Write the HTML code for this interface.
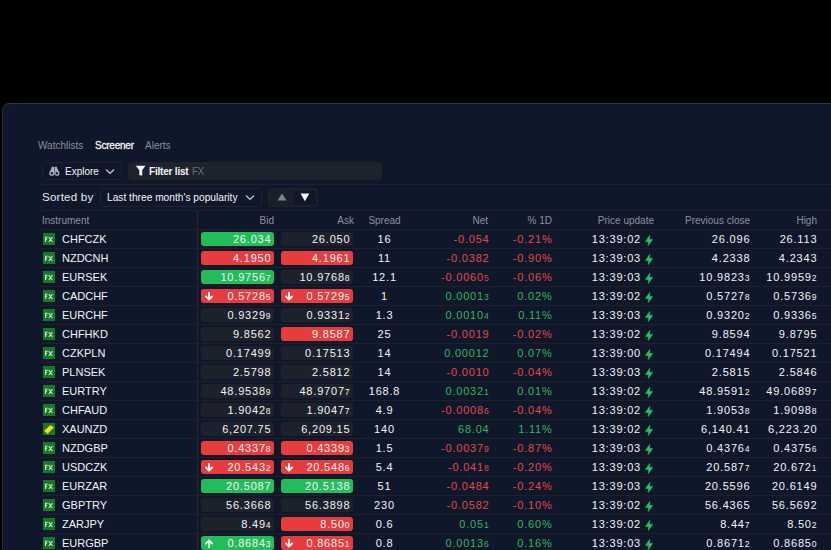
<!DOCTYPE html>
<html><head><meta charset="utf-8">
<style>
*{margin:0;padding:0;box-sizing:border-box}
html,body{width:831px;height:550px;overflow:hidden;background:#000}
body{font-family:"Liberation Sans",sans-serif;position:relative;color:#e8eaee}
.panel{position:absolute;left:2px;top:103px;width:900px;height:500px;background:#0f172a;border:1px solid #283346;border-left-color:#202a3a;border-radius:7px}
.abs{position:absolute;white-space:nowrap}
.tab{position:absolute;top:140px;font-size:10px;line-height:12px;color:#8b8f98}
.tab.on{color:#f3f4f6;letter-spacing:-0.22px;-webkit-text-stroke:0.3px #f3f4f6}
.btn{position:absolute;left:42px;top:162px;width:80px;height:18px;border:1px solid #1d2230;border-radius:4px;background:#10172a}
.filter{position:absolute;left:128px;top:162px;width:254px;height:18px;border-radius:4px;background:#1d222c}
.hline{position:absolute;left:41px;width:840px;height:1px;background:#221f2a}
.sortlbl{position:absolute;left:42px;top:190px;font-size:11.6px;letter-spacing:0.2px;line-height:14px;color:#e8eaee}
.dd{position:absolute;left:100px;top:188px;width:162px;height:19px;border:1px solid #1f2431;border-radius:4px}
.tog{position:absolute;left:268px;top:188px;width:50px;height:19px;border-radius:4px;background:#1b1f2a;box-shadow:inset 0 0 0 1px #1f232c}
.tog .sel{position:absolute;left:25px;top:2.5px;width:23px;height:14px;border-radius:3px;background:#0f172a}
.hdr{position:absolute;top:215px;font-size:10px;line-height:12px;color:#8e929b;white-space:nowrap}
.vline{position:absolute;left:197px;top:211px;width:1px;height:340px;background:#29282f}
.line{position:absolute;left:41px;width:800px;height:1px;background:#221f29}
.icw{position:absolute;left:43px}
.ic{width:12px;height:12px;background:#17782c;position:relative}
.ic svg{position:absolute;left:0;top:0}
.fx span{position:absolute;left:0;top:0;width:12px;text-align:center;font-size:6px;line-height:12px;font-weight:bold;color:#d9f5d9}
.name{position:absolute;left:62px;margin-top:1px;font-size:11px;line-height:19px;color:#f3f4f6;white-space:nowrap}
.box{position:absolute;height:14px;border-radius:3px;font-size:11px;line-height:14px;color:#f3f4f6;text-align:right;padding-right:2.6px;white-space:nowrap;letter-spacing:0.8px}
.box.g{background:#22bd5a}
.box.r{background:#e63c3e}
.box.n{background:#1c212b}
.box .ar{position:absolute;left:4px;top:3px}
.c{position:absolute;font-size:11px;line-height:19px;color:#f3f4f6;white-space:nowrap;letter-spacing:0.8px;margin-top:1px}
.ctr{text-align:center}
.rt{text-align:right}
.tg{color:#34b55b}
.tr{color:#e5484d}
small{font-size:8.6px;letter-spacing:0;margin-right:0.8px}
.bw{position:absolute;left:645px}
.bw svg{display:block}
</style></head><body>
<div class="panel"></div>
<div class="tab" style="left:38px">Watchlists</div>
<div class="tab on" style="left:95px">Screener</div>
<div class="tab" style="left:145px">Alerts</div>

<div class="btn"></div>
<svg class="abs" style="left:48px;top:166px" width="12" height="10" viewBox="0 0 12 10"><g fill="#a9aeb8"><path d="M3.9 0.8H6.1V5.5L1.6 6.6Z"/><path d="M6.5 0.8H8.7L11 6.6L6.5 5.5Z"/></g><g fill="none" stroke="#a9aeb8" stroke-width="1.4"><circle cx="3.8" cy="7.2" r="1.9"/><circle cx="8.8" cy="7.2" r="1.9"/></g></svg>
<div class="abs" style="left:65px;top:165px;font-size:10px;line-height:14px;color:#f3f4f6">Explore</div>
<svg class="abs" style="left:105px;top:168px" width="10" height="7" viewBox="0 0 10 7"><path d="M1 1.5L5 5.5L9 1.5" stroke="#c9ccd2" stroke-width="1.2" fill="none"/></svg>

<div class="filter"></div>
<svg class="abs" style="left:135px;top:165px" width="11" height="11" viewBox="0 0 11 11"><path d="M0.8 0.8H10.4L7.2 5.3V10.6L4.3 10.2V5.3Z" fill="#f3f4f6"/></svg>
<div class="abs" style="left:149px;top:165px;font-size:10px;letter-spacing:-0.2px;line-height:14px;color:#f3f4f6;font-weight:bold">Filter list</div>
<div class="abs" style="left:192px;top:165px;font-size:10px;letter-spacing:-0.6px;line-height:14px;color:#6b707a">FX</div>

<div class="hline" style="top:184px"></div>

<div class="sortlbl">Sorted by</div>
<div class="dd"></div>
<div class="abs" style="left:107px;top:191px;font-size:10.2px;line-height:14px;color:#f3f4f6">Last three month's popularity</div>
<svg class="abs" style="left:245px;top:194px" width="10" height="7" viewBox="0 0 10 7"><path d="M1 1.5L5 5.5L9 1.5" stroke="#c9ccd2" stroke-width="1.2" fill="none"/></svg>
<div class="tog"><div class="sel"></div></div>
<svg class="abs" style="left:277px;top:193px" width="10" height="8" viewBox="0 0 10 8"><path d="M5 0.5L9.5 7.5H0.5Z" fill="#80858f"/></svg>
<svg class="abs" style="left:299.5px;top:193px" width="10" height="9" viewBox="0 0 10 9"><path d="M0.5 0.6H9.3L4.9 8.2Z" fill="#f3f4f6"/></svg>

<div class="line" style="top:210px"></div>
<div class="hdr" style="left:42px">Instrument</div>
<div class="hdr" style="right:557px">Bid</div>
<div class="hdr" style="right:477px">Ask</div>
<div class="hdr" style="left:354px;width:61px;text-align:center">Spread</div>
<div class="hdr" style="right:343px">Net</div>
<div class="hdr" style="right:279px">% 1D</div>
<div class="hdr" style="right:177px">Price update</div>
<div class="hdr" style="right:81px">Previous close</div>
<div class="hdr" style="right:14px">High</div>
<div class="vline"></div>
<div class="line" style="top:229px"></div>
<div class="icw" style="top:233px"><div class="ic"><svg width="12" height="12" viewBox="0 0 12 12"><path d="M2.6 9V4.2H4.6M2.6 6.4H4.1M5.8 4.2L9.4 9M9.4 4.2L5.8 9" stroke="#cfe9cf" stroke-width="1.1" fill="none"/></svg></div></div>
<div class="name" style="top:229px">CHFCZK</div>
<div class="box g" style="top:232px;left:201px;width:73px"><span>26.034</span></div>
<div class="box n" style="top:232px;left:281px;width:72px"><span>26.050</span></div>
<div class="c ctr" style="top:229px;left:354px;width:61px">16</div>
<div class="c rt tr" style="top:229px;right:341.5px">-0.054</div>
<div class="c rt tr" style="top:229px;right:278.5px">-0.21%</div>
<div class="c rt" style="top:229px;right:190px">13:39:02</div>
<div class="bw" style="top:235px"><svg class="bolt" width="9" height="11" viewBox="0 0 9 11"><path d="M4.8 0.4L0.5 6.4H3.8L3.2 10.6L7.6 4.4H4.4Z" fill="#27c85f" stroke="#27c85f" stroke-width="0.6" stroke-linejoin="round"/></svg></div>
<div class="c rt" style="top:229px;right:80.70000000000005px">26.096</div>
<div class="c rt" style="top:229px;right:13.700000000000045px">26.113</div>
<div class="line" style="top:248px"></div>
<div class="icw" style="top:252px"><div class="ic"><svg width="12" height="12" viewBox="0 0 12 12"><path d="M2.6 9V4.2H4.6M2.6 6.4H4.1M5.8 4.2L9.4 9M9.4 4.2L5.8 9" stroke="#cfe9cf" stroke-width="1.1" fill="none"/></svg></div></div>
<div class="name" style="top:248px">NZDCNH</div>
<div class="box r" style="top:251px;left:201px;width:73px"><span>4.1950</span></div>
<div class="box r" style="top:251px;left:281px;width:72px"><span>4.1961</span></div>
<div class="c ctr" style="top:248px;left:354px;width:61px">11</div>
<div class="c rt tr" style="top:248px;right:341.5px">-0.0382</div>
<div class="c rt tr" style="top:248px;right:278.5px">-0.90%</div>
<div class="c rt" style="top:248px;right:190px">13:39:03</div>
<div class="bw" style="top:254px"><svg class="bolt" width="9" height="11" viewBox="0 0 9 11"><path d="M4.8 0.4L0.5 6.4H3.8L3.2 10.6L7.6 4.4H4.4Z" fill="#27c85f" stroke="#27c85f" stroke-width="0.6" stroke-linejoin="round"/></svg></div>
<div class="c rt" style="top:248px;right:80.70000000000005px">4.2338</div>
<div class="c rt" style="top:248px;right:13.700000000000045px">4.2343</div>
<div class="line" style="top:267px"></div>
<div class="icw" style="top:271px"><div class="ic"><svg width="12" height="12" viewBox="0 0 12 12"><path d="M2.6 9V4.2H4.6M2.6 6.4H4.1M5.8 4.2L9.4 9M9.4 4.2L5.8 9" stroke="#cfe9cf" stroke-width="1.1" fill="none"/></svg></div></div>
<div class="name" style="top:267px">EURSEK</div>
<div class="box g" style="top:270px;left:201px;width:73px"><span>10.9756<small>7</small></span></div>
<div class="box n" style="top:270px;left:281px;width:72px"><span>10.9768<small>8</small></span></div>
<div class="c ctr" style="top:267px;left:354px;width:61px">12.1</div>
<div class="c rt tr" style="top:267px;right:341.5px">-0.0060<small>5</small></div>
<div class="c rt tr" style="top:267px;right:278.5px">-0.06%</div>
<div class="c rt" style="top:267px;right:190px">13:39:03</div>
<div class="bw" style="top:273px"><svg class="bolt" width="9" height="11" viewBox="0 0 9 11"><path d="M4.8 0.4L0.5 6.4H3.8L3.2 10.6L7.6 4.4H4.4Z" fill="#27c85f" stroke="#27c85f" stroke-width="0.6" stroke-linejoin="round"/></svg></div>
<div class="c rt" style="top:267px;right:80.70000000000005px">10.9823<small>3</small></div>
<div class="c rt" style="top:267px;right:13.700000000000045px">10.9959<small>2</small></div>
<div class="line" style="top:286px"></div>
<div class="icw" style="top:290px"><div class="ic"><svg width="12" height="12" viewBox="0 0 12 12"><path d="M2.6 9V4.2H4.6M2.6 6.4H4.1M5.8 4.2L9.4 9M9.4 4.2L5.8 9" stroke="#cfe9cf" stroke-width="1.1" fill="none"/></svg></div></div>
<div class="name" style="top:286px">CADCHF</div>
<div class="box r" style="top:289px;left:201px;width:73px"><svg class="ar" width="8" height="9" viewBox="0 0 8 9"><path d="M4 0.5V7.5M1 4.5L4 7.5L7 4.5" stroke="#fff" stroke-width="1.8" fill="none" stroke-linecap="round" stroke-linejoin="round"/></svg><span>0.5728<small>5</small></span></div>
<div class="box r" style="top:289px;left:281px;width:72px"><svg class="ar" width="8" height="9" viewBox="0 0 8 9"><path d="M4 0.5V7.5M1 4.5L4 7.5L7 4.5" stroke="#fff" stroke-width="1.8" fill="none" stroke-linecap="round" stroke-linejoin="round"/></svg><span>0.5729<small>5</small></span></div>
<div class="c ctr" style="top:286px;left:354px;width:61px">1</div>
<div class="c rt tg" style="top:286px;right:341.5px">0.0001<small>3</small></div>
<div class="c rt tg" style="top:286px;right:278.5px">0.02%</div>
<div class="c rt" style="top:286px;right:190px">13:39:02</div>
<div class="bw" style="top:292px"><svg class="bolt" width="9" height="11" viewBox="0 0 9 11"><path d="M4.8 0.4L0.5 6.4H3.8L3.2 10.6L7.6 4.4H4.4Z" fill="#27c85f" stroke="#27c85f" stroke-width="0.6" stroke-linejoin="round"/></svg></div>
<div class="c rt" style="top:286px;right:80.70000000000005px">0.5727<small>8</small></div>
<div class="c rt" style="top:286px;right:13.700000000000045px">0.5736<small>9</small></div>
<div class="line" style="top:305px"></div>
<div class="icw" style="top:309px"><div class="ic"><svg width="12" height="12" viewBox="0 0 12 12"><path d="M2.6 9V4.2H4.6M2.6 6.4H4.1M5.8 4.2L9.4 9M9.4 4.2L5.8 9" stroke="#cfe9cf" stroke-width="1.1" fill="none"/></svg></div></div>
<div class="name" style="top:305px">EURCHF</div>
<div class="box n" style="top:308px;left:201px;width:73px"><span>0.9329<small>9</small></span></div>
<div class="box n" style="top:308px;left:281px;width:72px"><span>0.9331<small>2</small></span></div>
<div class="c ctr" style="top:305px;left:354px;width:61px">1.3</div>
<div class="c rt tg" style="top:305px;right:341.5px">0.0010<small>4</small></div>
<div class="c rt tg" style="top:305px;right:278.5px">0.11%</div>
<div class="c rt" style="top:305px;right:190px">13:39:03</div>
<div class="bw" style="top:311px"><svg class="bolt" width="9" height="11" viewBox="0 0 9 11"><path d="M4.8 0.4L0.5 6.4H3.8L3.2 10.6L7.6 4.4H4.4Z" fill="#27c85f" stroke="#27c85f" stroke-width="0.6" stroke-linejoin="round"/></svg></div>
<div class="c rt" style="top:305px;right:80.70000000000005px">0.9320<small>2</small></div>
<div class="c rt" style="top:305px;right:13.700000000000045px">0.9336<small>5</small></div>
<div class="line" style="top:324px"></div>
<div class="icw" style="top:328px"><div class="ic"><svg width="12" height="12" viewBox="0 0 12 12"><path d="M2.6 9V4.2H4.6M2.6 6.4H4.1M5.8 4.2L9.4 9M9.4 4.2L5.8 9" stroke="#cfe9cf" stroke-width="1.1" fill="none"/></svg></div></div>
<div class="name" style="top:324px">CHFHKD</div>
<div class="box n" style="top:327px;left:201px;width:73px"><span>9.8562</span></div>
<div class="box r" style="top:327px;left:281px;width:72px"><span>9.8587</span></div>
<div class="c ctr" style="top:324px;left:354px;width:61px">25</div>
<div class="c rt tr" style="top:324px;right:341.5px">-0.0019</div>
<div class="c rt tr" style="top:324px;right:278.5px">-0.02%</div>
<div class="c rt" style="top:324px;right:190px">13:39:02</div>
<div class="bw" style="top:330px"><svg class="bolt" width="9" height="11" viewBox="0 0 9 11"><path d="M4.8 0.4L0.5 6.4H3.8L3.2 10.6L7.6 4.4H4.4Z" fill="#27c85f" stroke="#27c85f" stroke-width="0.6" stroke-linejoin="round"/></svg></div>
<div class="c rt" style="top:324px;right:80.70000000000005px">9.8594</div>
<div class="c rt" style="top:324px;right:13.700000000000045px">9.8795</div>
<div class="line" style="top:343px"></div>
<div class="icw" style="top:347px"><div class="ic"><svg width="12" height="12" viewBox="0 0 12 12"><path d="M2.6 9V4.2H4.6M2.6 6.4H4.1M5.8 4.2L9.4 9M9.4 4.2L5.8 9" stroke="#cfe9cf" stroke-width="1.1" fill="none"/></svg></div></div>
<div class="name" style="top:343px">CZKPLN</div>
<div class="box n" style="top:346px;left:201px;width:73px"><span>0.17499</span></div>
<div class="box n" style="top:346px;left:281px;width:72px"><span>0.17513</span></div>
<div class="c ctr" style="top:343px;left:354px;width:61px">14</div>
<div class="c rt tg" style="top:343px;right:341.5px">0.00012</div>
<div class="c rt tg" style="top:343px;right:278.5px">0.07%</div>
<div class="c rt" style="top:343px;right:190px">13:39:00</div>
<div class="bw" style="top:349px"><svg class="bolt" width="9" height="11" viewBox="0 0 9 11"><path d="M4.8 0.4L0.5 6.4H3.8L3.2 10.6L7.6 4.4H4.4Z" fill="#27c85f" stroke="#27c85f" stroke-width="0.6" stroke-linejoin="round"/></svg></div>
<div class="c rt" style="top:343px;right:80.70000000000005px">0.17494</div>
<div class="c rt" style="top:343px;right:13.700000000000045px">0.17521</div>
<div class="line" style="top:362px"></div>
<div class="icw" style="top:366px"><div class="ic"><svg width="12" height="12" viewBox="0 0 12 12"><path d="M2.6 9V4.2H4.6M2.6 6.4H4.1M5.8 4.2L9.4 9M9.4 4.2L5.8 9" stroke="#cfe9cf" stroke-width="1.1" fill="none"/></svg></div></div>
<div class="name" style="top:362px">PLNSEK</div>
<div class="box n" style="top:365px;left:201px;width:73px"><span>2.5798</span></div>
<div class="box n" style="top:365px;left:281px;width:72px"><span>2.5812</span></div>
<div class="c ctr" style="top:362px;left:354px;width:61px">14</div>
<div class="c rt tr" style="top:362px;right:341.5px">-0.0010</div>
<div class="c rt tr" style="top:362px;right:278.5px">-0.04%</div>
<div class="c rt" style="top:362px;right:190px">13:39:03</div>
<div class="bw" style="top:368px"><svg class="bolt" width="9" height="11" viewBox="0 0 9 11"><path d="M4.8 0.4L0.5 6.4H3.8L3.2 10.6L7.6 4.4H4.4Z" fill="#27c85f" stroke="#27c85f" stroke-width="0.6" stroke-linejoin="round"/></svg></div>
<div class="c rt" style="top:362px;right:80.70000000000005px">2.5815</div>
<div class="c rt" style="top:362px;right:13.700000000000045px">2.5846</div>
<div class="line" style="top:381px"></div>
<div class="icw" style="top:385px"><div class="ic"><svg width="12" height="12" viewBox="0 0 12 12"><path d="M2.6 9V4.2H4.6M2.6 6.4H4.1M5.8 4.2L9.4 9M9.4 4.2L5.8 9" stroke="#cfe9cf" stroke-width="1.1" fill="none"/></svg></div></div>
<div class="name" style="top:381px">EURTRY</div>
<div class="box n" style="top:384px;left:201px;width:73px"><span>48.9538<small>9</small></span></div>
<div class="box n" style="top:384px;left:281px;width:72px"><span>48.9707<small>7</small></span></div>
<div class="c ctr" style="top:381px;left:354px;width:61px">168.8</div>
<div class="c rt tg" style="top:381px;right:341.5px">0.0032<small>1</small></div>
<div class="c rt tg" style="top:381px;right:278.5px">0.01%</div>
<div class="c rt" style="top:381px;right:190px">13:39:02</div>
<div class="bw" style="top:387px"><svg class="bolt" width="9" height="11" viewBox="0 0 9 11"><path d="M4.8 0.4L0.5 6.4H3.8L3.2 10.6L7.6 4.4H4.4Z" fill="#27c85f" stroke="#27c85f" stroke-width="0.6" stroke-linejoin="round"/></svg></div>
<div class="c rt" style="top:381px;right:80.70000000000005px">48.9591<small>2</small></div>
<div class="c rt" style="top:381px;right:13.700000000000045px">49.0689<small>7</small></div>
<div class="line" style="top:400px"></div>
<div class="icw" style="top:404px"><div class="ic"><svg width="12" height="12" viewBox="0 0 12 12"><path d="M2.6 9V4.2H4.6M2.6 6.4H4.1M5.8 4.2L9.4 9M9.4 4.2L5.8 9" stroke="#cfe9cf" stroke-width="1.1" fill="none"/></svg></div></div>
<div class="name" style="top:400px">CHFAUD</div>
<div class="box n" style="top:403px;left:201px;width:73px"><span>1.9042<small>8</small></span></div>
<div class="box n" style="top:403px;left:281px;width:72px"><span>1.9047<small>7</small></span></div>
<div class="c ctr" style="top:400px;left:354px;width:61px">4.9</div>
<div class="c rt tr" style="top:400px;right:341.5px">-0.0008<small>6</small></div>
<div class="c rt tr" style="top:400px;right:278.5px">-0.04%</div>
<div class="c rt" style="top:400px;right:190px">13:39:02</div>
<div class="bw" style="top:406px"><svg class="bolt" width="9" height="11" viewBox="0 0 9 11"><path d="M4.8 0.4L0.5 6.4H3.8L3.2 10.6L7.6 4.4H4.4Z" fill="#27c85f" stroke="#27c85f" stroke-width="0.6" stroke-linejoin="round"/></svg></div>
<div class="c rt" style="top:400px;right:80.70000000000005px">1.9053<small>8</small></div>
<div class="c rt" style="top:400px;right:13.700000000000045px">1.9098<small>8</small></div>
<div class="line" style="top:419px"></div>
<div class="icw" style="top:423px"><div class="ic"><svg width="12" height="12" viewBox="0 0 12 12"><path d="M1.1 7.8L7.6 1.9L10.9 4.7L4.5 10.9Z" fill="#f2e21b"/><path d="M1.8 8.5L4.6 10.1L10.5 4.6" stroke="#a6a51f" stroke-width="0.6" fill="none"/></svg></div></div>
<div class="name" style="top:419px">XAUNZD</div>
<div class="box n" style="top:422px;left:201px;width:73px"><span>6,207.75</span></div>
<div class="box n" style="top:422px;left:281px;width:72px"><span>6,209.15</span></div>
<div class="c ctr" style="top:419px;left:354px;width:61px">140</div>
<div class="c rt tg" style="top:419px;right:341.5px">68.04</div>
<div class="c rt tg" style="top:419px;right:278.5px">1.11%</div>
<div class="c rt" style="top:419px;right:190px">13:39:02</div>
<div class="bw" style="top:425px"><svg class="bolt" width="9" height="11" viewBox="0 0 9 11"><path d="M4.8 0.4L0.5 6.4H3.8L3.2 10.6L7.6 4.4H4.4Z" fill="#27c85f" stroke="#27c85f" stroke-width="0.6" stroke-linejoin="round"/></svg></div>
<div class="c rt" style="top:419px;right:80.70000000000005px">6,140.41</div>
<div class="c rt" style="top:419px;right:13.700000000000045px">6,223.20</div>
<div class="line" style="top:438px"></div>
<div class="icw" style="top:442px"><div class="ic"><svg width="12" height="12" viewBox="0 0 12 12"><path d="M2.6 9V4.2H4.6M2.6 6.4H4.1M5.8 4.2L9.4 9M9.4 4.2L5.8 9" stroke="#cfe9cf" stroke-width="1.1" fill="none"/></svg></div></div>
<div class="name" style="top:438px">NZDGBP</div>
<div class="box r" style="top:441px;left:201px;width:73px"><span>0.4337<small>8</small></span></div>
<div class="box r" style="top:441px;left:281px;width:72px"><span>0.4339<small>3</small></span></div>
<div class="c ctr" style="top:438px;left:354px;width:61px">1.5</div>
<div class="c rt tr" style="top:438px;right:341.5px">-0.0037<small>9</small></div>
<div class="c rt tr" style="top:438px;right:278.5px">-0.87%</div>
<div class="c rt" style="top:438px;right:190px">13:39:03</div>
<div class="bw" style="top:444px"><svg class="bolt" width="9" height="11" viewBox="0 0 9 11"><path d="M4.8 0.4L0.5 6.4H3.8L3.2 10.6L7.6 4.4H4.4Z" fill="#27c85f" stroke="#27c85f" stroke-width="0.6" stroke-linejoin="round"/></svg></div>
<div class="c rt" style="top:438px;right:80.70000000000005px">0.4376<small>4</small></div>
<div class="c rt" style="top:438px;right:13.700000000000045px">0.4375<small>6</small></div>
<div class="line" style="top:457px"></div>
<div class="icw" style="top:461px"><div class="ic"><svg width="12" height="12" viewBox="0 0 12 12"><path d="M2.6 9V4.2H4.6M2.6 6.4H4.1M5.8 4.2L9.4 9M9.4 4.2L5.8 9" stroke="#cfe9cf" stroke-width="1.1" fill="none"/></svg></div></div>
<div class="name" style="top:457px">USDCZK</div>
<div class="box r" style="top:460px;left:201px;width:73px"><svg class="ar" width="8" height="9" viewBox="0 0 8 9"><path d="M4 0.5V7.5M1 4.5L4 7.5L7 4.5" stroke="#fff" stroke-width="1.8" fill="none" stroke-linecap="round" stroke-linejoin="round"/></svg><span>20.543<small>2</small></span></div>
<div class="box r" style="top:460px;left:281px;width:72px"><svg class="ar" width="8" height="9" viewBox="0 0 8 9"><path d="M4 0.5V7.5M1 4.5L4 7.5L7 4.5" stroke="#fff" stroke-width="1.8" fill="none" stroke-linecap="round" stroke-linejoin="round"/></svg><span>20.548<small>6</small></span></div>
<div class="c ctr" style="top:457px;left:354px;width:61px">5.4</div>
<div class="c rt tr" style="top:457px;right:341.5px">-0.041<small>8</small></div>
<div class="c rt tr" style="top:457px;right:278.5px">-0.20%</div>
<div class="c rt" style="top:457px;right:190px">13:39:03</div>
<div class="bw" style="top:463px"><svg class="bolt" width="9" height="11" viewBox="0 0 9 11"><path d="M4.8 0.4L0.5 6.4H3.8L3.2 10.6L7.6 4.4H4.4Z" fill="#27c85f" stroke="#27c85f" stroke-width="0.6" stroke-linejoin="round"/></svg></div>
<div class="c rt" style="top:457px;right:80.70000000000005px">20.587<small>7</small></div>
<div class="c rt" style="top:457px;right:13.700000000000045px">20.672<small>1</small></div>
<div class="line" style="top:476px"></div>
<div class="icw" style="top:480px"><div class="ic"><svg width="12" height="12" viewBox="0 0 12 12"><path d="M2.6 9V4.2H4.6M2.6 6.4H4.1M5.8 4.2L9.4 9M9.4 4.2L5.8 9" stroke="#cfe9cf" stroke-width="1.1" fill="none"/></svg></div></div>
<div class="name" style="top:476px">EURZAR</div>
<div class="box g" style="top:479px;left:201px;width:73px"><span>20.5087</span></div>
<div class="box g" style="top:479px;left:281px;width:72px"><span>20.5138</span></div>
<div class="c ctr" style="top:476px;left:354px;width:61px">51</div>
<div class="c rt tr" style="top:476px;right:341.5px">-0.0484</div>
<div class="c rt tr" style="top:476px;right:278.5px">-0.24%</div>
<div class="c rt" style="top:476px;right:190px">13:39:03</div>
<div class="bw" style="top:482px"><svg class="bolt" width="9" height="11" viewBox="0 0 9 11"><path d="M4.8 0.4L0.5 6.4H3.8L3.2 10.6L7.6 4.4H4.4Z" fill="#27c85f" stroke="#27c85f" stroke-width="0.6" stroke-linejoin="round"/></svg></div>
<div class="c rt" style="top:476px;right:80.70000000000005px">20.5596</div>
<div class="c rt" style="top:476px;right:13.700000000000045px">20.6149</div>
<div class="line" style="top:495px"></div>
<div class="icw" style="top:499px"><div class="ic"><svg width="12" height="12" viewBox="0 0 12 12"><path d="M2.6 9V4.2H4.6M2.6 6.4H4.1M5.8 4.2L9.4 9M9.4 4.2L5.8 9" stroke="#cfe9cf" stroke-width="1.1" fill="none"/></svg></div></div>
<div class="name" style="top:495px">GBPTRY</div>
<div class="box n" style="top:498px;left:201px;width:73px"><span>56.3668</span></div>
<div class="box n" style="top:498px;left:281px;width:72px"><span>56.3898</span></div>
<div class="c ctr" style="top:495px;left:354px;width:61px">230</div>
<div class="c rt tr" style="top:495px;right:341.5px">-0.0582</div>
<div class="c rt tr" style="top:495px;right:278.5px">-0.10%</div>
<div class="c rt" style="top:495px;right:190px">13:39:02</div>
<div class="bw" style="top:501px"><svg class="bolt" width="9" height="11" viewBox="0 0 9 11"><path d="M4.8 0.4L0.5 6.4H3.8L3.2 10.6L7.6 4.4H4.4Z" fill="#27c85f" stroke="#27c85f" stroke-width="0.6" stroke-linejoin="round"/></svg></div>
<div class="c rt" style="top:495px;right:80.70000000000005px">56.4365</div>
<div class="c rt" style="top:495px;right:13.700000000000045px">56.5692</div>
<div class="line" style="top:514px"></div>
<div class="icw" style="top:518px"><div class="ic"><svg width="12" height="12" viewBox="0 0 12 12"><path d="M2.6 9V4.2H4.6M2.6 6.4H4.1M5.8 4.2L9.4 9M9.4 4.2L5.8 9" stroke="#cfe9cf" stroke-width="1.1" fill="none"/></svg></div></div>
<div class="name" style="top:514px">ZARJPY</div>
<div class="box n" style="top:517px;left:201px;width:73px"><span>8.49<small>4</small></span></div>
<div class="box r" style="top:517px;left:281px;width:72px"><span>8.50<small>0</small></span></div>
<div class="c ctr" style="top:514px;left:354px;width:61px">0.6</div>
<div class="c rt tg" style="top:514px;right:341.5px">0.05<small>1</small></div>
<div class="c rt tg" style="top:514px;right:278.5px">0.60%</div>
<div class="c rt" style="top:514px;right:190px">13:39:02</div>
<div class="bw" style="top:520px"><svg class="bolt" width="9" height="11" viewBox="0 0 9 11"><path d="M4.8 0.4L0.5 6.4H3.8L3.2 10.6L7.6 4.4H4.4Z" fill="#27c85f" stroke="#27c85f" stroke-width="0.6" stroke-linejoin="round"/></svg></div>
<div class="c rt" style="top:514px;right:80.70000000000005px">8.44<small>7</small></div>
<div class="c rt" style="top:514px;right:13.700000000000045px">8.50<small>2</small></div>
<div class="line" style="top:533px"></div>
<div class="icw" style="top:537px"><div class="ic"><svg width="12" height="12" viewBox="0 0 12 12"><path d="M2.6 9V4.2H4.6M2.6 6.4H4.1M5.8 4.2L9.4 9M9.4 4.2L5.8 9" stroke="#cfe9cf" stroke-width="1.1" fill="none"/></svg></div></div>
<div class="name" style="top:533px">EURGBP</div>
<div class="box g" style="top:536px;left:201px;width:73px"><svg class="ar" width="8" height="9" viewBox="0 0 8 9"><path d="M4 8.5V1.5M1 4.5L4 1.5L7 4.5" stroke="#fff" stroke-width="1.8" fill="none" stroke-linecap="round" stroke-linejoin="round"/></svg><span>0.8684<small>3</small></span></div>
<div class="box r" style="top:536px;left:281px;width:72px"><svg class="ar" width="8" height="9" viewBox="0 0 8 9"><path d="M4 0.5V7.5M1 4.5L4 7.5L7 4.5" stroke="#fff" stroke-width="1.8" fill="none" stroke-linecap="round" stroke-linejoin="round"/></svg><span>0.8685<small>1</small></span></div>
<div class="c ctr" style="top:533px;left:354px;width:61px">0.8</div>
<div class="c rt tg" style="top:533px;right:341.5px">0.0013<small>6</small></div>
<div class="c rt tg" style="top:533px;right:278.5px">0.16%</div>
<div class="c rt" style="top:533px;right:190px">13:39:03</div>
<div class="bw" style="top:539px"><svg class="bolt" width="9" height="11" viewBox="0 0 9 11"><path d="M4.8 0.4L0.5 6.4H3.8L3.2 10.6L7.6 4.4H4.4Z" fill="#27c85f" stroke="#27c85f" stroke-width="0.6" stroke-linejoin="round"/></svg></div>
<div class="c rt" style="top:533px;right:80.70000000000005px">0.8671<small>2</small></div>
<div class="c rt" style="top:533px;right:13.700000000000045px">0.8685<small>0</small></div>
</body></html>
